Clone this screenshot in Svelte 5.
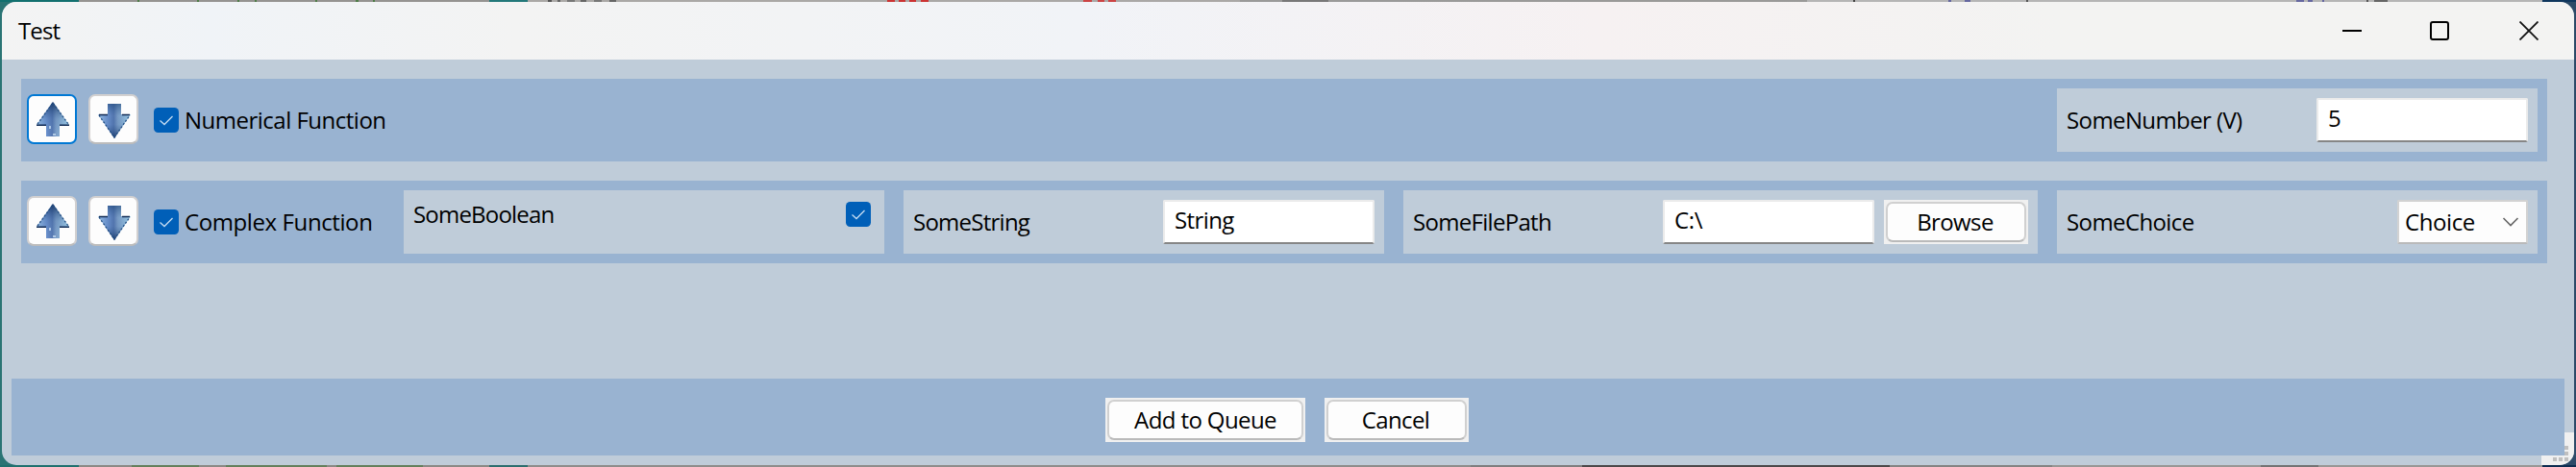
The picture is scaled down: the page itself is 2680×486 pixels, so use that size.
<script>
  const functions = [
    {
      name: 'Numerical Function', focused: true, ls: -0.5,
      fields: [{ kind: 'text', label: 'SomeNumber (V)', value: '5', lls: -0.6, vls: 0, pad: true }]
    },
    {
      name: 'Complex Function', focused: false, ls: -0.4,
      fields: [
        { kind: 'bool', label: 'SomeBoolean', lls: -0.8 },
        { kind: 'text', label: 'SomeString', value: 'String', lls: -0.75, vls: -0.6 },
        { kind: 'file', label: 'SomeFilePath', value: 'C:\\', lls: -0.7, vls: -0.3 },
        { kind: 'choice', label: 'SomeChoice', value: 'Choice', lls: -0.6, vls: -0.4 }
      ]
    }
  ];

  // slivers of the windows lying behind the dialog: [x, width, colour]
  const above = [
    [0, 82, '#12706f'], [82, 427, '#959391'], [143, 2, '#4f7d48'], [205, 2, '#4f7d48'], [247, 2, '#4f7d48'],
    [265, 2, '#4f7d48'], [328, 2, '#4f7d48'], [370, 3, '#4f7d48'], [388, 2, '#4f7d48'], [509, 40, '#23787a'],
    [549, 741, '#aaa8a6'], [570, 4, '#555'], [580, 3, '#666'], [590, 8, '#777'], [604, 6, '#666'], [618, 8, '#777'], [634, 7, '#666'],
    [923, 8, '#c33'], [935, 7, '#c33'], [946, 7, '#c33'], [958, 8, '#c33'], [1127, 9, '#c44'], [1142, 7, '#c44'], [1153, 8, '#c44'],
    [1290, 590, '#9a9a99'], [1334, 48, '#787878'], [1880, 765, '#b5b5b5'], [1928, 2, '#444'], [2027, 3, '#6668a0'], [2044, 6, '#6668a0'],
    [2108, 2, '#555'], [2389, 8, '#6668a0'], [2401, 5, '#6668a0'], [2416, 2, '#6668a0'], [2462, 2, '#555'], [2470, 14, '#666'],
    [2645, 35, '#0f365d']
  ];
  const below = [
    [0, 82, '#20706e'], [82, 427, '#8b8a85'], [137, 70, '#64805c'], [235, 105, '#64805c'], [350, 90, '#64805c'], [509, 40, '#2d6e6e'],
    [549, 981, '#8e8d8b'], [1530, 116, '#7f7e7e'], [1646, 320, '#4c4949'], [1966, 169, '#858483'], [2135, 510, '#989795'],
    [2352, 60, '#747474'], [2645, 35, '#0d2c50']
  ];
</script>

{#snippet check()}
  <svg class="check" viewBox="0 0 26 26"><rect width="26" height="26" rx="4.5" fill="#005fb8" /><path d="M6.5 13.5 L11 17.5 L19.5 9" fill="none" stroke="#c4dcf2" stroke-width="1.3" /></svg>
{/snippet}

{#snippet strip(parts)}
  <svg class="strip" width="2680" height="2" shape-rendering="crispEdges">
    {#each parts as [x, w, c]}<rect {x} width={w} height="2" fill={c} />{/each}
  </svg>
{/snippet}

{#snippet arrow(down)}
  <svg width="34" height="36" viewBox="0 0 34 36">
    <defs>
      <linearGradient id="steel" x1="0" x2="1"><stop offset="0" stop-color="#9fc6ea" /><stop offset=".3" stop-color="#6d93cf" /><stop offset=".48" stop-color="#5577b0" /><stop offset=".6" stop-color="#7d9fc8" /><stop offset="1" stop-color="#a6d6ee" /></linearGradient>
      <linearGradient id="shade" x1="0" y1="0" x2="0" y2="1"><stop offset="0" stop-color="#0c2a58" stop-opacity=".85" /><stop offset=".5" stop-color="#355f98" stop-opacity=".18" /><stop offset="1" stop-color="#5c88c0" stop-opacity=".05" /></linearGradient>
      <linearGradient id="shadeDown" x1="0" y1="0" x2="0" y2="1"><stop offset="0" stop-color="#1d4577" stop-opacity=".6" /><stop offset=".35" stop-color="#355f98" stop-opacity=".1" /><stop offset=".6" stop-color="#355f98" stop-opacity=".15" /><stop offset="1" stop-color="#0c2a58" stop-opacity=".8" /></linearGradient>
    </defs>
    {#if down}
      <path d="M10 0H24V11H34L17 36L0 11H10Z" fill="url(#steel)" />
      <path d="M10 0H24V11H34L17 36L0 11H10Z" fill="url(#shadeDown)" />
      <path d="M10 11.5H1M33 11.5H25" stroke="#102b55" stroke-width="1.6" />
      <path d="M1 12L17 35L33 12" fill="none" stroke="#234f84" stroke-width="1.3" stroke-dasharray="2 2" />
    {:else}
      <path d="M17 0L34 24H24V36H10V24H0Z" fill="url(#steel)" />
      <path d="M17 0L34 24H24V36H10V24H0Z" fill="url(#shade)" />
      <path d="M0 24.2H10M24 24.2H34" stroke="#102b55" stroke-width="1.6" />
      <path d="M1 23L17 1L33 23" fill="none" stroke="#234f84" stroke-width="1.3" stroke-dasharray="2 2" />
      <path d="M14 25v3M17 34h3" stroke="#c9e0f4" stroke-width="1.5" />
    {/if}
  </svg>
{/snippet}

<div class="desktop">
  {@render strip(above)}
  <div class="window">
    <header class="titlebar">
      <span class="title">Test</span>
      <div class="controls">
        <svg width="20" height="20"><path d="M0 10H20" stroke="#000" stroke-width="2" /></svg>
        <svg width="20" height="20"><rect x="1" y="1" width="18" height="18" rx="2" fill="none" stroke="#000" stroke-width="2" /></svg>
        <svg width="20" height="20"><path d="M.5 .5L19.5 19.5M19.5 .5L.5 19.5" stroke="#111" stroke-width="1.8" /></svg>
      </div>
    </header>

    <main class="content">
      {#each functions as fn}
        <section class="row">
          <button class="move up" class:focused={fn.focused} aria-label="Move up">{@render arrow(false)}</button>
          <button class="move down" aria-label="Move down">{@render arrow(true)}</button>
          <div class="enable">{@render check()}<span style:letter-spacing="{fn.ls}px">{fn.name}</span></div>
          <div class="fields">
            {#each fn.fields as f}
              <div class="field {f.kind}">
                <span class="label" style:letter-spacing="{f.lls}px">{f.label}</span>
                {#if f.kind === 'bool'}
                  {@render check()}
                {:else if f.kind === 'choice'}
                  <div class="combo"><span style:letter-spacing="{f.vls}px">{f.value}</span>
                    <svg width="18" height="10" viewBox="0 0 18 10"><path d="M1.5 1L9 8.5L16.5 1" fill="none" stroke="#666" stroke-width="1.6" /></svg>
                  </div>
                {:else}
                  <div class="input"><span style:letter-spacing="{f.vls}px">{f.value}</span></div>
                  {#if f.kind === 'file'}
                    <button class="push browse"><span>Browse</span></button>
                  {/if}
                {/if}
              </div>
            {/each}
          </div>
        </section>
      {/each}
    </main>

    <footer class="actions">
      <button class="push add"><span>Add to Queue</span></button>
      <button class="push cancel"><span>Cancel</span></button>
    </footer>
    <svg class="grip" width="34" height="34" viewBox="0 0 34 34">
      <path d="M24 0H34V34H0V24H24Z" fill="#f0f0f0" />
      <path d="M24 14h4v4h-4zM24 20h4v4h-4zM12 26h4v4h-4zM18 26h4v4h-4zM24 26h4v4h-4z" fill="#bfbfbf" />
    </svg>
  </div>
  {@render strip(below)}
</div>

<style>
  :global(body) { margin: 0; overflow: hidden; }
  .desktop {
    display: flex; flex-direction: column; align-items: center; width: 2680px; height: 486px;
    background: linear-gradient(90deg, #2a7474 50%, #2c4a68 50%);
    font-family: "Open Sans", "Noto Sans", sans-serif; font-size: 24px; line-height: 32px; color: #000;
  }
  .strip { display: block; flex: none; }
  .window {
    position: relative; display: flex; flex-direction: column; box-sizing: border-box; flex: none;
    width: 2676px; height: 482px; border-radius: 15px; overflow: hidden; background: #bfccd9;
  }
  .titlebar {
    display: flex; align-items: center; justify-content: space-between; box-sizing: border-box;
    height: 60px; padding: 0 37px 0 17px; flex: none;
    background: linear-gradient(90deg, #f3f3f3 0, #f0f3f7 8%, #f3f3f3 20%, #f1f3f7 42%, #f6f1f2 62%, #f3f3f2 80%);
  }
  .title { letter-spacing: -0.9px; }
  .controls { display: flex; align-items: center; }
  .controls svg { display: block; margin-left: 71px; }
  .controls svg:last-child { margin-left: 73px; }
  .content { display: flex; flex-direction: column; gap: 20px; padding: 20px 28px 0 20px; flex: 1; }
  .row { display: flex; box-sizing: border-box; height: 86px; padding: 10px 10px 10px 6px; background: #99b3d1; }
  button { font: inherit; color: inherit; padding: 0; margin: 0; box-sizing: border-box; white-space: nowrap; }
  .move {
    display: flex; align-items: center; justify-content: center; width: 52px; height: 52px; margin: 6px 12px 0 0;
    border: 2px solid #d2d0d0; border-bottom-color: #bcbcbc; border-radius: 7px; background: #fdfdfd;
  }
  .move.up { padding-left: 2px; }
  .move.down { padding: 3px 0 0 2px; }
  .move.focused { border-color: #0078d4; }
  .check { display: block; width: 26px; height: 26px; flex: none; }
  .enable { display: flex; align-items: center; gap: 6px; height: 66px; margin-left: 4px; white-space: nowrap; }
  .fields { display: flex; gap: 20px; margin-left: auto; }
  .field { display: flex; align-items: center; box-sizing: border-box; width: 500px; height: 66px; padding: 0 10px; background: #bfccd9; }
  .field.file { width: 660px; }
  .label { flex: 1; white-space: nowrap; }
  .bool { align-items: flex-start; padding: 8px 14px 0 10px; }
  .bool .check { margin-top: 4px; }
  .bool .label { line-height: 34px; }
  .input {
    box-sizing: border-box; width: 220px; height: 46px; padding: 3px 10px; flex: none; background: #fff;
    border: 2px solid #ebebeb; border-bottom-color: #868686; border-radius: 2px;
  }
  .combo {
    display: flex; align-items: center; justify-content: space-between; box-sizing: border-box;
    width: 136px; height: 46px; padding: 0 7px 0 6px; background: #fdfdfd;
    border: 2px solid #d2d2d2; border-bottom-color: #bababa; border-radius: 2px;
  }
  .push { display: flex; height: 46px; padding: 2px; border: 0; background: #f0f0f0; flex: none; letter-spacing: -0.6px; }
  .push span {
    display: flex; align-items: center; justify-content: center; box-sizing: border-box; width: 100%; height: 42px;
    background: #fdfdfd; border: 2px solid #d0d0d0; border-bottom-color: #bababa; border-radius: 7px;
  }
  .browse { width: 150px; margin-left: 10px; }
  .browse span, .cancel span { padding-right: 2px; }
  .actions {
    display: flex; justify-content: center; gap: 20px; box-sizing: border-box; height: 80px; margin: 0 10px 10px;
    padding: 20px 2px 0 0; background: #99b3d1; flex: none;
  }
  .add { width: 208px; }
  .cancel { width: 150px; }
  .grip { position: absolute; right: 0; bottom: 0; }
</style>
